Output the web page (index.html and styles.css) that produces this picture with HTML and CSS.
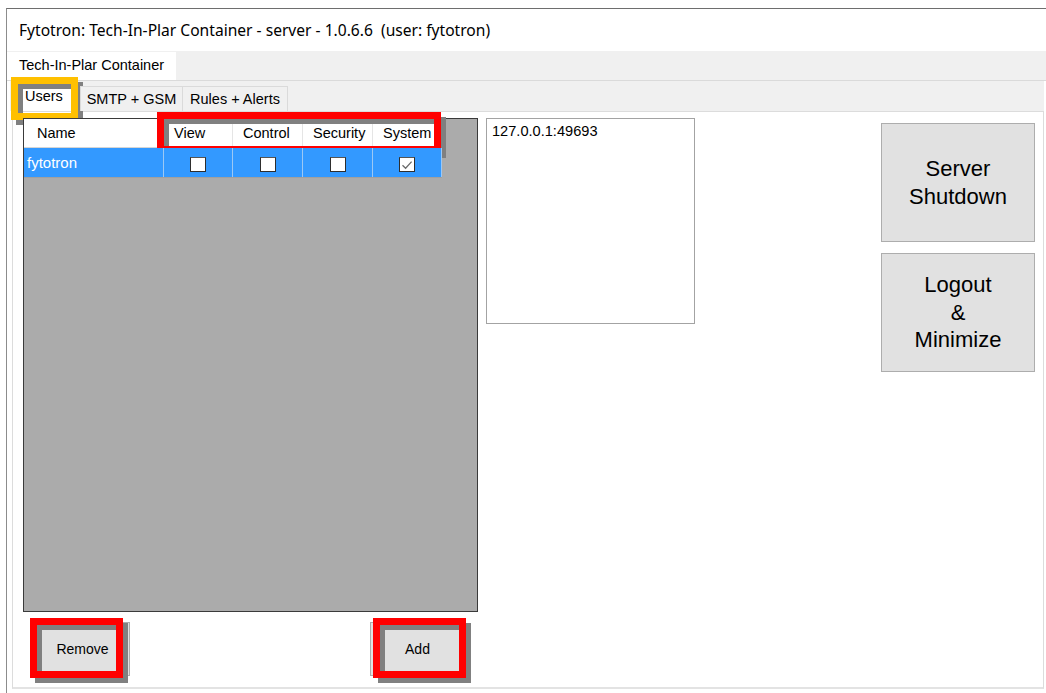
FILE: index.html
```html
<!DOCTYPE html>
<html lang="en">
<head>
<meta charset="utf-8">
<title>Fytotron server</title>
<link rel="stylesheet" href="styles.css">
</head>
<body>
<div class="window">
  <div class="titlebar">Fytotron: Tech-In-Plar Container - server - 1.0.6.6&nbsp; (user: fytotron)</div>

  <div class="tabstrip outer-strip">
    <div class="tab outer-tab is-active">Tech-In-Plar Container</div>
  </div>

  <div class="outer-page">
    <div class="tabstrip inner-strip">
      <div class="tab inner-tab is-active">Users<span class="mark mark-gold mark-users"></span></div>
      <div class="tab inner-tab tab-smtp">SMTP + GSM</div>
      <div class="tab inner-tab tab-rules">Rules + Alerts</div>
    </div>

    <div class="inner-page">
      <div class="users-col">
        <div class="grid">
          <div class="grid-row grid-head">
            <div class="cell col-name">Name</div>
            <div class="cell col-flag">View</div>
            <div class="cell col-flag">Control</div>
            <div class="cell col-flag">Security</div>
            <div class="cell col-flag">System</div>
            <span class="mark mark-red mark-head"></span>
          </div>
          <div class="grid-row grid-sel">
            <div class="cell col-name">fytotron</div>
            <div class="cell col-flag"><span class="check"></span></div>
            <div class="cell col-flag"><span class="check"></span></div>
            <div class="cell col-flag"><span class="check"></span></div>
            <div class="cell col-flag"><span class="check is-on"><svg viewBox="0 0 16 16" width="16" height="16"><path d="M3.5 8.2 L6.6 11.2 L12.6 4.6" fill="none" stroke="#6b6b6b" stroke-width="1.3"/></svg></span></div>
          </div>
        </div>

        <div class="grid-actions">
          <div class="btn-wrap">
            <button class="btn btn-small">Remove</button>
            <span class="mark mark-red mark-remove"></span>
          </div>
          <div class="btn-wrap">
            <button class="btn btn-small">Add</button>
            <span class="mark mark-red mark-add"></span>
          </div>
        </div>
      </div>

      <div class="sessions">127.0.0.1:49693</div>

      <div class="server-actions">
        <button class="btn btn-big">Server<br>Shutdown</button>
        <button class="btn btn-big">Logout<br>&amp;<br>Minimize</button>
      </div>
    </div>
  </div>
</div>
</body>
</html>
```

FILE: styles.css
```css
* { box-sizing: border-box; }

html, body {
  margin: 0;
  padding: 0;
  background: #ffffff;
}

body {
  width: 1046px;
  height: 693px;
  overflow: hidden;
  font-family: "Liberation Sans", Arial, sans-serif;
  font-size: 14.5px;
  color: #000;
}

/* window frame */
.window {
  margin: 8px 0 0 6px;
  width: 1040px;
  height: 685px;
  border-top: 1px solid #6e6e6e;
  border-left: 1px solid #8c8c8c;
  background: #f0f0f0;
  display: flex;
  flex-direction: column;
}

.titlebar {
  height: 42px;
  flex: none;
  background: #fff;
  padding-left: 12px;
  line-height: 42px;
  font-family: "Noto Sans", "Open Sans", sans-serif;
  font-size: 15.6px;
  white-space: nowrap;
}

/* tab strips */
.tabstrip {
  display: flex;
  align-items: flex-end;
  flex: none;
  background: #f0f0f0;
}

.outer-strip {
  height: 29px;
}

.outer-tab {
  width: 169px;
  height: 28px;
  padding-left: 12px;
  line-height: 27px;
  background: #fff;
  white-space: nowrap;
}

.outer-page {
  flex: 1;
  display: flex;
  flex-direction: column;
  border-top: 1px solid #dadada;
  padding: 0 2px 4px 3px;
  background: #fff;
}

.inner-strip {
  height: 30px;
  padding-left: 4px;
  background: #f0f0f0;
}

.tab {
  position: relative;
}

.inner-tab {
  height: 25px;
  line-height: 24px;
  text-align: center;
  background: #f0f0f0;
  border: 1px solid #dadada;
  border-bottom: none;
  white-space: nowrap;
}

.tab-smtp {
  width: 103px;
}

.tab-rules {
  width: 106px;
  margin-left: -1px;
}

.inner-tab.is-active {
  width: 65px;
  height: 29px;
  padding-left: 10px;
  text-align: left;
  line-height: 26px;
  background: #fff;
  margin-right: 1px;
}

.inner-page {
  flex: 1;
  display: flex;
  align-items: flex-start;
  border: 1px solid #dcdcdc;
  border-bottom: 2px solid #e3e3e3;
  margin-left: 2px;
  padding: 6px 8px 0 10px;
  background: #fff;
}

/* users grid */
.users-col {
  display: flex;
  flex-direction: column;
  width: 455px;
  flex: none;
}

.grid {
  position: relative;
  height: 494px;
  border: 1px solid #3a3a3a;
  background: #ababab;
}

.grid-row {
  position: relative;
  display: flex;
  width: 418px;
}

.grid-head {
  height: 29px;
  background: #fff;
  border-bottom: 1px solid #d5d5d5;
}

.grid-sel {
  height: 30px;
  background: #3399ff;
  color: #fff;
  border-bottom: 1px solid #a0a0a0;
}

.cell {
  display: flex;
  align-items: center;
  border-right: 1px solid #e5e5e5;
  white-space: nowrap;
}

.grid-sel .cell {
  border-right-color: #9cc8f4;
}

.col-name {
  width: 140px;
  padding-left: 13px;
}

.grid-sel .col-name {
  padding-left: 3px;
  padding-bottom: 1px;
  font-size: 15px;
}

.col-flag {
  width: 70px;
  padding-left: 10px;
}

.col-flag:nth-child(2),
.col-flag:last-of-type {
  width: 69px;
}

.grid-sel .col-flag {
  justify-content: center;
  padding-left: 0;
}

.check {
  display: block;
  width: 16px;
  height: 15px;
  margin-top: 3px;
  background: #fff;
  border: 1px solid #2e2e2e;
  border-top-color: #555;
  position: relative;
}

.check svg {
  position: absolute;
  left: -1px;
  top: -1px;
}

/* buttons */
.btn {
  font-family: "Liberation Sans", Arial, sans-serif;
  color: #000;
  background: #e1e1e1;
  border: 1px solid #adadad;
  padding: 0;
  margin: 0;
}

.grid-actions {
  display: flex;
  justify-content: space-between;
  padding: 10px 13px 0 12px;
}

.btn-wrap {
  position: relative;
}

.btn-small {
  display: block;
  width: 95px;
  height: 54px;
  font-size: 14px;
}

.sessions {
  width: 209px;
  height: 206px;
  margin-left: 8px;
  padding: 3px 0 0 5px;
  border: 1px solid #a3a3a3;
  font-size: 14.6px;
  line-height: 18px;
  flex: none;
}

.server-actions {
  margin-left: auto;
  margin-top: 5px;
  display: flex;
  flex-direction: column;
  gap: 11px;
}

.btn-big {
  width: 154px;
  height: 119px;
  font-size: 22px;
  line-height: 27.5px;
  text-align: center;
}

/* highlight frames drawn over controls */
.mark {
  position: absolute;
  border: 7px solid #ff0000;
  box-shadow: 5px 5px 0 #808080, inset 5px 5px 0 #808080;
  pointer-events: none;
}

.mark-gold {
  border-color: #ffc000;
}

.mark-users {
  left: -4px;
  top: -6px;
  width: 67px;
  height: 43px;
}

.mark-head {
  left: 133px;
  top: -7px;
  width: 284px;
  height: 41px;
}

.mark-remove {
  left: -5px;
  top: -4px;
  width: 93px;
  height: 60px;
}

.mark-add {
  left: 3px;
  top: -4px;
  width: 93px;
  height: 60px;
}
```
